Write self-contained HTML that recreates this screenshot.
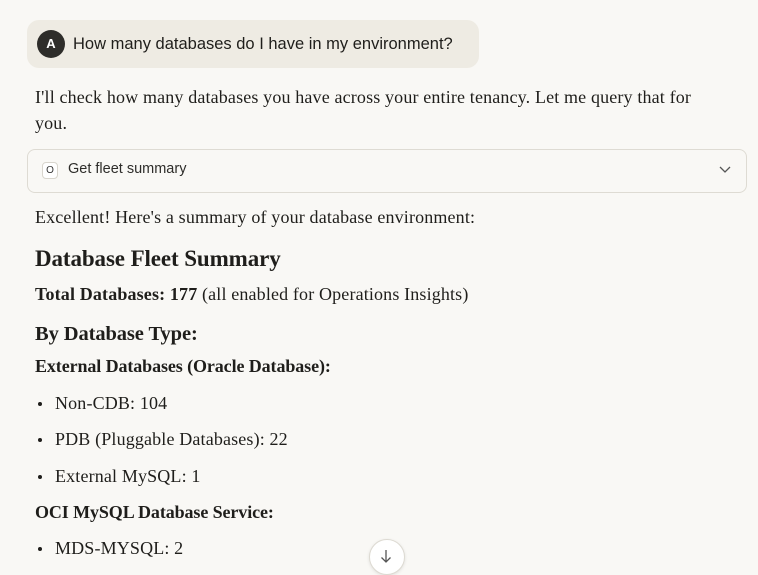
<!DOCTYPE html>
<html><head><style>
body{margin:0;width:758px;height:573px;background:#f9f8f5;overflow:hidden;position:relative;font-family:"Liberation Serif",serif;color:#1f1e1b}
.t{position:absolute;left:35px;white-space:nowrap;font-size:18px;line-height:26px;letter-spacing:0.15px}
.b{font-weight:bold;letter-spacing:-0.1px}
.li{left:55px}
.dot{position:absolute;left:38px;width:4px;height:4px;border-radius:50%;background:#1f1e1b}
</style></head><body>
<div style="position:absolute;left:27px;top:20px;width:452px;height:48px;background:#eeebe3;border-radius:12px"></div>
<div style="position:absolute;left:37px;top:30px;width:28px;height:28px;border-radius:50%;background:#2e2d2a;color:#fff;font:bold 13px/28px 'Liberation Sans',sans-serif;text-align:center">A</div>
<div style="position:absolute;left:73px;top:33px;font:16.5px/22px 'Liberation Sans',sans-serif;color:#1f1e1b;white-space:nowrap">How many databases do I have in my environment?</div>
<div class="t" style="top:84px">I'll check how many databases you have across your entire tenancy. Let me query that for</div>
<div class="t" style="top:110px">you.</div>
<div style="position:absolute;left:27px;top:149px;width:718px;height:42px;border:1px solid #dedbd3;border-radius:8px"></div>
<div style="position:absolute;left:42px;top:162px;width:14px;height:15px;border:1px solid #d8d5cd;border-radius:4px;background:#fff;font:10px/15px 'Liberation Sans',sans-serif;text-align:center;color:#333">O</div>
<div style="position:absolute;left:68px;top:160px;font:14.5px/18px 'Liberation Sans',sans-serif;color:#2e2d2a">Get fleet summary</div>
<svg style="position:absolute;left:718px;top:163px" width="14" height="12"><path d="M2 4 L7 9 L12 4" fill="none" stroke="#555" stroke-width="1.3"/></svg>
<div class="t" style="top:204px">Excellent! Here's a summary of your database environment:</div>
<div class="t b" style="top:245px;font-size:23px;line-height:28px">Database Fleet Summary</div>
<div class="t" style="top:281px"><b>Total Databases: 177</b> (all enabled for Operations Insights)</div>
<div class="t b" style="top:321px;font-size:20.5px">By Database Type:</div>
<div class="t b" style="top:353px">External Databases (Oracle Database):</div>
<div class="dot" style="top:402px"></div><div class="t li" style="top:390px">Non-CDB: 104</div>
<div class="dot" style="top:438px"></div><div class="t li" style="top:426px">PDB (Pluggable Databases): 22</div>
<div class="dot" style="top:475px"></div><div class="t li" style="top:463px">External MySQL: 1</div>
<div class="t b" style="top:499px">OCI MySQL Database Service:</div>
<div class="dot" style="top:547px"></div><div class="t li" style="top:535px">MDS-MYSQL: 2</div>
<div style="position:absolute;left:369px;top:539px;width:34px;height:34px;border-radius:50%;background:#fff;border:1px solid #dddad2;box-shadow:0 1px 3px rgba(0,0,0,.1)"></div>
<svg style="position:absolute;left:378px;top:548px" width="16" height="16"><path d="M8 2 V14 M3.5 9.5 L8 14 L12.5 9.5" fill="none" stroke="#555" stroke-width="1.3"/></svg>
</body></html>
